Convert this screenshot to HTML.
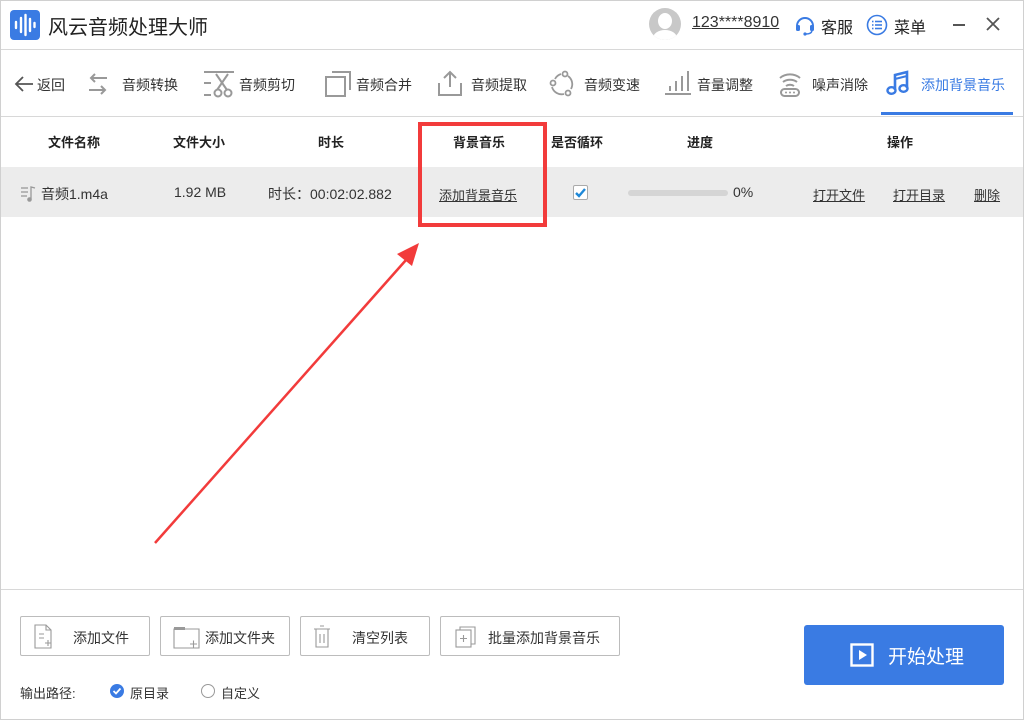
<!DOCTYPE html>
<html><head><meta charset="utf-8"><style>
*{margin:0;padding:0;box-sizing:border-box}
body{width:1024px;height:720px;overflow:hidden;background:#fff;font-family:"Liberation Sans","Noto Sans CJK SC",sans-serif;color:#333;position:relative}
.abs{position:absolute}
.win{position:absolute;left:0;top:0;width:1024px;height:720px;border:1px solid #d0d0d0}
.tb{font-size:14px;color:#333;top:75px}
.hd{font-size:13px;font-weight:bold;color:#222;top:132px}
.cell{font-size:14px;color:#333;top:184px}
.u{text-decoration:underline}
.btn{position:absolute;top:616px;height:40px;border:1px solid #bcbcbc;border-radius:2px;background:#fff;font-size:14px;color:#333}
</style></head><body>
<div class="win"></div>
<!-- title bar -->
<div class="abs" style="left:10px;top:10px;width:30px;height:30px;background:#3a7be3;border-radius:4px">
<svg width="30" height="30"><g stroke="#fff" stroke-width="2.4" stroke-linecap="round"><line x1="6" y1="12" x2="6" y2="18"/><line x1="11" y1="8" x2="11" y2="22"/><line x1="15.5" y1="5" x2="15.5" y2="25"/><line x1="20" y1="9" x2="20" y2="21"/><line x1="24.5" y1="13" x2="24.5" y2="17"/></g></svg></div>
<div class="abs" style="left:48px;top:11px;font-size:20px;color:#222">风云音频处理大师</div>
<div class="abs" style="left:649px;top:8px;width:32px;height:32px;border-radius:50%;background:#c8c8c8;overflow:hidden"><div style="position:absolute;left:9px;top:5px;width:14px;height:16px;border-radius:50%;background:#fff"></div><div style="position:absolute;left:4px;top:22px;width:24px;height:16px;border-radius:50%;background:#fff"></div></div>
<div class="abs u" style="left:692px;top:14px;font-size:16px;color:#333">123****8910</div>
<svg class="abs" style="left:794px;top:13px" width="22" height="24"><path d="M3 13 A8 8 0 0 1 19 13" fill="none" stroke="#3a7be3" stroke-width="2"/><rect x="2" y="12" width="4" height="6" rx="1.5" fill="#3a7be3"/><rect x="16" y="12" width="4" height="6" rx="1.5" fill="#3a7be3"/><path d="M18 18 Q17 21 12 21" fill="none" stroke="#3a7be3" stroke-width="1.5"/><circle cx="11" cy="21" r="1.6" fill="#3a7be3"/></svg>
<div class="abs" style="left:821px;top:14px;font-size:16px;color:#222">客服</div>
<svg class="abs" style="left:866px;top:14px" width="22" height="22"><circle cx="11" cy="11" r="9.5" fill="none" stroke="#3a7be3" stroke-width="1.6"/><g stroke="#3a7be3" stroke-width="1.6"><line x1="6" y1="7.5" x2="7.5" y2="7.5"/><line x1="9" y1="7.5" x2="16" y2="7.5"/><line x1="6" y1="11" x2="7.5" y2="11"/><line x1="9" y1="11" x2="16" y2="11"/><line x1="6" y1="14.5" x2="7.5" y2="14.5"/><line x1="9" y1="14.5" x2="16" y2="14.5"/></g></svg>
<div class="abs" style="left:894px;top:14px;font-size:16px;color:#222">菜单</div>
<div class="abs" style="left:953px;top:24px;width:12px;height:2px;background:#555"></div>
<svg class="abs" style="left:986px;top:17px" width="14" height="14"><path d="M1 1L13 13M13 1L1 13" stroke="#555" stroke-width="1.8"/></svg>
<div class="abs" style="left:1px;top:49px;width:1022px;height:1px;background:#d8d8d8"></div>
<!-- toolbar -->
<svg class="abs" style="left:14px;top:75px" width="20" height="18"><path d="M19 9H3M9 2L2 9L9 16" fill="none" stroke="#555" stroke-width="1.8"/></svg>
<div class="abs tb" style="left:37px">返回</div>
<svg class="abs" style="left:86px;top:71px" width="24" height="26"><path d="M21 7H5M9 3L5 7L9 11M3 19H19M15 15L19 19L15 23" fill="none" stroke="#999" stroke-width="2"/></svg>
<div class="abs tb" style="left:122px">音频转换</div>
<svg class="abs" style="left:203px;top:70px" width="32" height="28"><g stroke="#999" stroke-width="2" fill="none"><line x1="1" y1="2" x2="31" y2="2"/><line x1="1" y1="13" x2="8" y2="13"/><line x1="1" y1="25" x2="8" y2="25"/><path d="M13 4L24 20M25 4L14 20"/><circle cx="15" cy="23" r="3.5"/><circle cx="25" cy="23" r="3.5"/></g></svg>
<div class="abs tb" style="left:239px">音频剪切</div>
<svg class="abs" style="left:324px;top:70px" width="28" height="28"><g stroke="#999" stroke-width="2" fill="none"><rect x="2" y="7" width="19" height="19"/><path d="M8 2H26V20"/></g></svg>
<div class="abs tb" style="left:356px">音频合并</div>
<svg class="abs" style="left:437px;top:69px" width="26" height="28"><g stroke="#999" stroke-width="2" fill="none"><path d="M13 18V3M7 9L13 3L19 9M2 14V26H24V14"/></g></svg>
<div class="abs tb" style="left:471px">音频提取</div>
<svg class="abs" style="left:549px;top:70px" width="26" height="28"><g stroke="#999" stroke-width="1.8" fill="none"><path d="M6 9A10 10 0 0 1 12 4M19 6A10 10 0 0 1 22 19M15 24A10 10 0 0 1 3 17"/><circle cx="16" cy="4" r="2.5"/><circle cx="4" cy="13" r="2.5"/><circle cx="19" cy="23" r="2.5"/></g></svg>
<div class="abs tb" style="left:584px">音频变速</div>
<svg class="abs" style="left:664px;top:70px" width="28" height="26"><g stroke="#999" stroke-width="2"><line x1="1" y1="24" x2="27" y2="24"/><line x1="6" y1="16" x2="6" y2="21"/><line x1="12" y1="11" x2="12" y2="21"/><line x1="18" y1="6" x2="18" y2="21"/><line x1="24" y1="1" x2="24" y2="21"/></g></svg>
<div class="abs tb" style="left:697px">音量调整</div>
<svg class="abs" style="left:778px;top:70px" width="24" height="28"><g stroke="#999" stroke-width="2" fill="none"><path d="M2 8A14 12 0 0 1 22 8M5 12A10 8 0 0 1 19 12M8 16A6 5 0 0 1 16 16"/><rect x="3" y="19" width="18" height="7" rx="3.5"/></g><g fill="#999"><circle cx="8" cy="22.5" r="1"/><circle cx="12" cy="22.5" r="1"/><circle cx="16" cy="22.5" r="1"/></g></svg>
<div class="abs tb" style="left:812px">噪声消除</div>
<svg class="abs" style="left:886px;top:70px" width="24" height="26"><g fill="none" stroke="#3a7be3" stroke-width="2.6"><path d="M9 20V5L21 2V18"/><path d="M9 9L21 6" stroke-width="2"/></g><ellipse cx="5.5" cy="20.5" rx="4" ry="3.3" fill="none" stroke="#3a7be3" stroke-width="2.4"/><ellipse cx="17.5" cy="18.5" rx="4" ry="3.3" fill="none" stroke="#3a7be3" stroke-width="2.4"/></svg>
<div class="abs tb" style="left:921px;color:#3a7be3">添加背景音乐</div>
<div class="abs" style="left:881px;top:112px;width:132px;height:3px;background:#3a7be3"></div>
<div class="abs" style="left:1px;top:116px;width:1022px;height:1px;background:#d8d8d8"></div>
<!-- table -->
<div class="abs hd" style="left:48px">文件名称</div>
<div class="abs hd" style="left:173px">文件大小</div>
<div class="abs hd" style="left:318px">时长</div>
<div class="abs hd" style="left:453px">背景音乐</div>
<div class="abs hd" style="left:551px">是否循环</div>
<div class="abs hd" style="left:687px">进度</div>
<div class="abs hd" style="left:887px">操作</div>
<div class="abs" style="left:1px;top:167px;width:1022px;height:50px;background:#ececec"></div>
<svg class="abs" style="left:19px;top:185px" width="18" height="18"><g stroke="#999" stroke-width="1.3"><line x1="2" y1="3" x2="9" y2="3"/><line x1="2" y1="7" x2="9" y2="7"/><line x1="2" y1="11" x2="8" y2="11"/><path d="M12 14V2L16 3" fill="none"/></g><circle cx="10.5" cy="14.5" r="2.3" fill="#999"/></svg>
<div class="abs cell" style="left:41px">音频1.m4a</div>
<div class="abs cell" style="left:174px">1.92 MB</div>
<div class="abs cell" style="left:268px">时长：00:02:02.882</div>
<div class="abs cell u" style="left:439px;font-size:13px;top:185px">添加背景音乐</div>
<div class="abs" style="left:573px;top:185px;width:15px;height:15px;border:1px solid #aaa;border-radius:2px;background:#fff"><svg width="13" height="13" style="position:absolute;left:0;top:0"><path d="M2 7L5 10L11 3" fill="none" stroke="#1e88d8" stroke-width="2.4"/></svg></div>
<div class="abs" style="left:628px;top:190px;width:100px;height:6px;border-radius:3px;background:#d5d5d5"></div>
<div class="abs cell" style="left:733px">0%</div>
<div class="abs cell u" style="left:813px;font-size:13px;top:185px">打开文件</div>
<div class="abs cell u" style="left:893px;font-size:13px;top:185px">打开目录</div>
<div class="abs cell u" style="left:974px;font-size:13px;top:185px">删除</div>
<!-- red box & arrow -->
<div class="abs" style="left:418px;top:122px;width:129px;height:105px;border:4px solid #f23b3b"></div>
<svg class="abs" style="left:0;top:0" width="1024" height="720"><line x1="155" y1="543" x2="406" y2="260" stroke="#f23b3b" stroke-width="2.5"/><path d="M419 243L397 254L412 266Z" fill="#f23b3b"/></svg>
<!-- bottom -->
<div class="abs" style="left:1px;top:589px;width:1022px;height:1px;background:#d8d8d8"></div>
<div class="btn" style="left:20px;width:130px"><svg class="abs" style="left:12px;top:7px" width="22" height="26"><g fill="none" stroke="#999" stroke-width="1.1"><path d="M2 1H13L18 6V24H2Z"/><path d="M13 1V6H18"/><path d="M6 10H11M6 14H11M12 19H18M15 16V22"/></g></svg><span class="abs" style="left:52px;top:11px">添加文件</span></div>
<div class="btn" style="left:160px;width:130px"><svg class="abs" style="left:12px;top:9px" width="28" height="24"><g fill="none" stroke="#999" stroke-width="1.1"><path d="M1 3H26V22H1Z"/><path d="M17 18H24M20.5 14.5V21.5"/></g><rect x="1" y="1" width="11" height="3" fill="#999"/></svg><span class="abs" style="left:44px;top:11px">添加文件夹</span></div>
<div class="btn" style="left:300px;width:130px"><svg class="abs" style="left:12px;top:8px" width="18" height="24"><g fill="none" stroke="#999" stroke-width="1.1"><path d="M1 4H17M7 1H11M3 4V22H15V4M7 9V18M11 9V18"/></g></svg><span class="abs" style="left:51px;top:11px">清空列表</span></div>
<div class="btn" style="left:440px;width:180px"><svg class="abs" style="left:14px;top:9px" width="22" height="22"><g fill="none" stroke="#999" stroke-width="1.1"><rect x="1" y="4" width="15" height="17"/><path d="M5 4V1H20V18H16M8.5 9V16M5 12.5H12"/></g></svg><span class="abs" style="left:47px;top:11px">批量添加背景音乐</span></div>
<div class="abs" style="left:20px;top:683px;font-size:13px;color:#333">输出路径:</div>
<div class="abs" style="left:110px;top:684px;width:14px;height:14px;border-radius:50%;background:#3a7be3"><svg width="14" height="14" style="position:absolute"><path d="M3.5 7L6 9.5L10.5 4.5" fill="none" stroke="#fff" stroke-width="1.8"/></svg></div>
<div class="abs" style="left:130px;top:683px;font-size:13px;color:#333">原目录</div>
<div class="abs" style="left:201px;top:684px;width:14px;height:14px;border-radius:50%;border:1px solid #999"></div>
<div class="abs" style="left:221px;top:683px;font-size:13px;color:#333">自定义</div>
<div class="abs" style="left:804px;top:625px;width:200px;height:60px;background:#3a7be3;border-radius:3px"><svg class="abs" style="left:46px;top:18px" width="24" height="24"><rect x="1.5" y="1.5" width="21" height="21" fill="none" stroke="#fff" stroke-width="2.4"/><path d="M9 7L17 12L9 17Z" fill="#fff"/></svg><span class="abs" style="left:84px;top:17px;font-size:19px;color:#fff">开始处理</span></div>
</body></html>
